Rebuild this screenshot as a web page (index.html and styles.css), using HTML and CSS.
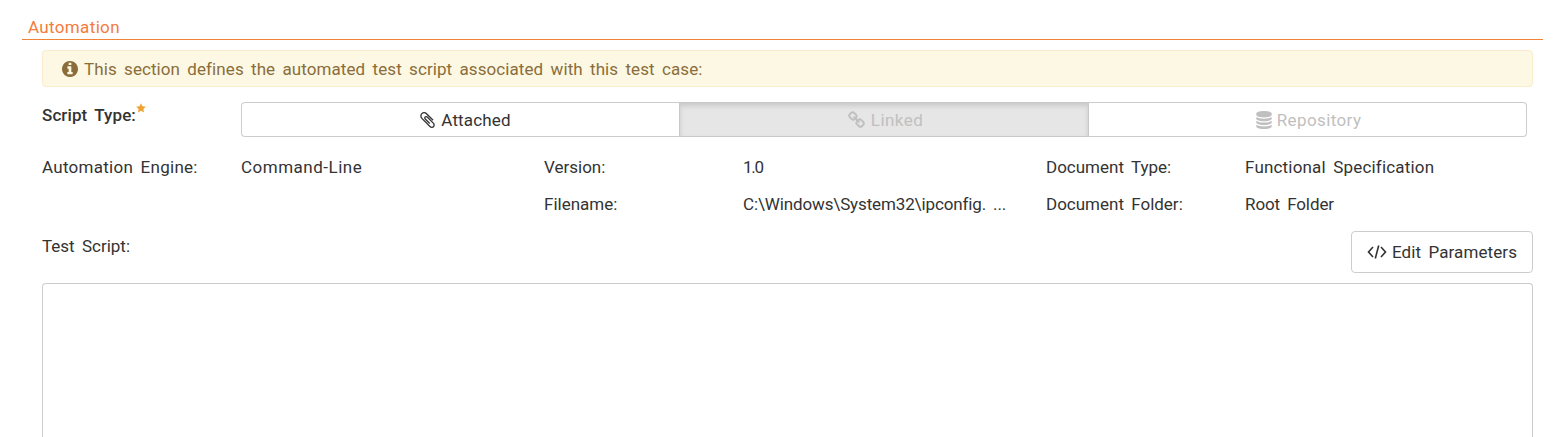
FILE: index.html
```html
<!DOCTYPE html>
<html lang="en">
<head>
<meta charset="utf-8">
<title>Automation</title>
<link rel="stylesheet" href="styles.css">
</head>
<body>
<section class="panel">
  <h2 class="title"><span class="t-auto">Automation</span></h2>
  <div class="alert">
    <svg class="info" viewBox="0 128 1536 1536"><path d="M1024 1376v-160q0-14-9-23t-23-9h-96v-512q0-14-9-23t-23-9h-320q-14 0-23 9t-9 23v160q0 14 9 23t23 9h96v320h-96q-14 0-23 9t-9 23v160q0 14 9 23t23 9h448q14 0 23-9t9-23zm-128-896v-160q0-14-9-23t-23-9h-192q-14 0-23 9t-9 23v160q0 14 9 23t23 9h192q14 0 23-9t9-23zm640 416q0 209-103 385.5t-279.5 279.5-385.5 103-385.5-103-279.5-279.5-103-385.5 103-385.5 279.5-279.5 385.5-103 385.5 103 279.5 279.5 103 385.5z"/></svg>
    <span class="t-alert">This section defines the automated test script associated with this test case:</span>
  </div>
  <div class="type-row">
    <div class="label required"><span class="t-script">Script Type:</span><svg class="star" viewBox="0 0 10 10"><path d="M5 .2 6.5 3.2 9.8 3.7 7.4 6 8 9.4 5 7.8 2 9.4 2.6 6 .2 3.7 3.5 3.2z"/></svg></div>
    <div class="group">
      <div class="option attached"><svg class="clip" viewBox="190 128 1410 1536"><path d="M1596 1385q0 117-79 196t-196 79q-135 0-235-100l-777-776q-113-115-113-271 0-159 110-270t269-111q158 0 273 113l605 606q10 10 10 22 0 16-30.5 46.5t-46.5 30.5q-13 0-23-10l-606-607q-79-77-181-77-106 0-179 75t-73 181q0 105 76 181l776 777q63 63 145 63 64 0 106-42t42-106q0-82-63-145l-581-581q-26-24-60-24-29 0-48 19t-19 48q0 32 25 59l410 410q10 10 10 22 0 16-31 47t-47 31q-12 0-22-10l-410-410q-63-61-63-149 0-82 57-139t139-57q88 0 149 63l581 581q100 98 100 235z"/></svg><span class="t-attached">Attached</span></div>
      <div class="option linked"><svg class="chain" viewBox="64 0 1664 1664"><path d="M1520 1216q0-40-28-68l-208-208q-28-28-68-28-42 0-72 32 3 3 19 18.5t21.5 21.5 15 19 13 25.5 3.5 27.5q0 40-28 68t-68 28q-15 0-27.5-3.5t-25.5-13-19-15-21.5-21.5-18.5-19q-33 31-33 73 0 40 28 68l206 207q27 27 68 27 40 0 68-26l147-146q28-28 28-67zm-703-705q0-40-28-68l-206-207q-28-28-68-28-39 0-68 27l-147 146q-28 28-28 67 0 40 28 68l208 208q27 27 68 27 42 0 72-31-3-3-19-18.5t-21.5-21.5-15-19-13-25.5-3.5-27.5q0-40 28-68t68-28q15 0 27.5 3.5t25.5 13 19 15 21.5 21.5 18.5 19q33-31 33-73zm895 705q0 120-85 203l-147 146q-83 83-203 83-121 0-204-85l-206-207q-83-83-83-203 0-123 88-209l-88-88q-86 88-208 88-120 0-204-84l-208-208q-84-84-84-204t85-203l147-146q83-83 203-83 121 0 204 85l206 207q83 83 83 203 0 123-88 209l88 88q86-88 208-88 120 0 204 84l208 208q84 84 84 204z"/></svg><span class="t-linked">Linked</span></div>
      <div class="option repository"><svg class="database" viewBox="128 0 1536 1792"><path d="M896 768q237 0 443-43t325-127v170q0 69-103 128t-280 93.5-385 34.5-385-34.5-280-93.5-103-128v-170q119 84 325 127t443 43zm0 768q237 0 443-43t325-127v170q0 69-103 128t-280 93.5-385 34.5-385-34.5-280-93.5-103-128v-170q119 84 325 127t443 43zm0-384q237 0 443-43t325-127v170q0 69-103 128t-280 93.5-385 34.5-385-34.5-280-93.5-103-128v-170q119 84 325 127t443 43zm0-1152q208 0 385 34.5t280 93.5 103 128v128q0 69-103 128t-280 93.5-385 34.5-385-34.5-280-93.5-103-128v-128q0-69 103-128t280-93.5 385-34.5z"/></svg><span class="t-repo">Repository</span></div>
    </div>
  </div>
  <div class="fields">
    <span class="t-engine">Automation Engine:</span><span class="t-cmd">Command-Line</span><span class="t-version">Version:</span><span class="t-one">1.0</span><span class="t-dtype">Document Type:</span><span class="t-func">Functional Specification</span>
    <span></span><span></span><span class="t-filename">Filename:</span><span class="t-path">C:\Windows\System32\ipconfig. ...</span><span class="t-dfolder">Document Folder:</span><span class="t-root">Root Folder</span>
  </div>
  <div class="script-row">
    <span class="t-test">Test Script:</span>
    <button class="edit"><svg class="code" viewBox="0 0 20 16"><path d="M6 3 1.500 8 6 13M14 3l4.500 5-4.500 5M11.700 1.500 8.300 14.500"/></svg><span class="t-edit">Edit Parameters</span></button>
  </div>
  <div class="editor"></div>
</section>
</body>
</html>
```
FILE: styles.css
```css
* { box-sizing: border-box; }
body { margin: 0; height: 437px; overflow: hidden; background: #fff; color: #333; font: 17px/24px Roboto, "Liberation Sans", sans-serif; word-spacing: 3px; }
svg { display: block; flex: none; fill: currentColor; }
span { white-space: nowrap; }
.panel { padding: 15px 10px 0 22px; }
.title { margin: 0; height: 25px; padding-left: 6px; border-bottom: 1px solid #f08336; color: #f47b3c; font-size: 17px; font-weight: 400; line-height: 24px; }
.alert { display: flex; align-items: center; gap: 6px; height: 37px; margin: 10px 10px 0 20px; padding-left: 19px; border: 1px solid #faebcc; border-radius: 4px; background: #fcf8e3; color: #8a6d3b; }
.info { width: 16px; height: 16px; }
.type-row { display: flex; margin: 15px 16px 0 20px; height: 35px; }
.label { display: flex; width: 199px; padding-top: 1px; font-weight: 500; }
.star { width: 10px; height: 10px; color: #f0a32f; }
.group { display: grid; grid-template-columns: 438px 410px 438px; height: 35px; }
.option { display: flex; align-items: center; justify-content: center; gap: 6px; border: 1px solid #ccc; background: #fff; }
.attached { padding-left: 10px; border-right: 0; border-radius: 4px 0 0 4px; }
.linked { background: #e6e6e6; color: #c0c0c0; border-color: #c8c8c8; box-shadow: inset 0 3px 5px rgba(0,0,0,.125); padding-left: 3px; }
.repository { gap: 5px; padding-left: 2px; border-left: 0; color: #bfbfbf; border-radius: 0 4px 4px 0; }
.clip { width: 15px; height: 16px; }
.chain { width: 17px; height: 17px; }
.database { width: 16px; height: 18px; }
.fields { display: grid; grid-template-columns: 199px 303px 199px 303px 199px 280px; grid-auto-rows: 37px; margin: 18px 0 0 20px; }
.script-row { display: flex; justify-content: space-between; margin: 2px 10px 0 20px; height: 42px; }
.script-row > span { padding-top: 3px; }
.edit { display: flex; align-items: center; gap: 5px; width: 182px; height: 42px; padding: 0 0 0 15px; border: 1px solid #ccc; border-radius: 4px; background: #fff; color: #333; font: inherit; word-spacing: inherit; }
.code { width: 20px; height: 16px; fill: none; stroke: currentColor; stroke-width: 1.6; }
.editor { height: 154px; margin: 10px 10px 0 20px; border: 1px solid #ccc; border-bottom: 0; border-radius: 4px 4px 0 0; }

.t-auto { letter-spacing: .35px; }
.t-alert { letter-spacing: .08px; }
.t-script { letter-spacing: .1px; }
.t-attached { letter-spacing: .15px; }
.t-linked { letter-spacing: .45px; }
.t-repo { letter-spacing: .4px; }
.t-engine { letter-spacing: .27px; }
.t-cmd { letter-spacing: .5px; }
.t-one { letter-spacing: -1.3px; }
.t-func { letter-spacing: .18px; }
.t-path { letter-spacing: -.13px; }
.t-root { letter-spacing: -.1px; }
.t-edit { letter-spacing: .1px; }
```
